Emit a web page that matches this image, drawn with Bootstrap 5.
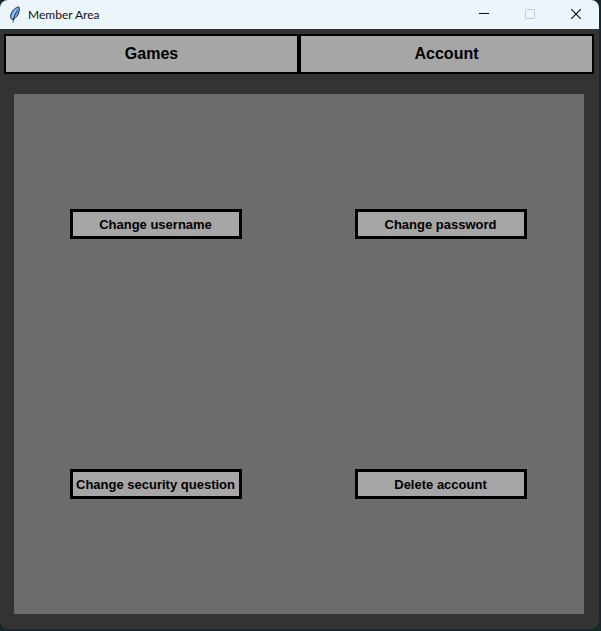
<!DOCTYPE html>
<html lang="en">
<head>
<meta charset="utf-8">
<meta name="viewport" content="width=device-width, initial-scale=1">
<title>Member Area</title>
<link href="https://cdn.jsdelivr.net/npm/bootstrap@5.3.0/dist/css/bootstrap.min.css" rel="stylesheet">
<style>
  body { background: #16262d; font-family: "Liberation Sans", Arial, sans-serif; padding: 0 2px 2px 0; }
  .app-window { background: #333; border-radius: 8px; }
  .title-bar { background: #ecf5f9; height: 29px; padding-left: 8px; }
  .title-text { font: 400 12px/16px Lato, "Open Sans", sans-serif; color: #111; margin: 0 0 0 7px; }
  .caption-btn { width: 46px; height: 29px; color: #111; padding: 0 0 2px; }
  .caption-btn:disabled { color: #c2c7ca; border: 0; opacity: 1; }
  .tab-row { padding: 5px 5px 0 4px; }
  .tab-btn, .action-btn { background: #a6a6a6; color: #000; border: 2px solid #000; border-radius: 0; font-weight: 700; }
  .tab-btn { height: 40px; font-size: 16px; line-height: 20px; padding: 0 0 1px; }
  .tab-btn:hover, .action-btn:hover { background: #b3b3b3; color: #000; border-color: #000; }
  .panel { background: #6c6c6c; margin: 20px 15px 15px 14px; }
  .panel .col-6 { padding-right: 2px; }
  .action-btn { width: 172px; height: 30px; border-width: 3px; font-size: 13px; line-height: 20px; padding: 2px 0 0; }
</style>
</head>
<body class="vh-100 d-flex flex-column">
<div class="app-window flex-fill d-flex flex-column overflow-hidden">
  <header class="title-bar d-flex align-items-center">
    <svg width="13" height="18" viewBox="0 0 13 18" aria-hidden="true">
      <path d="M10.800 .8C8 1.200 5 3.600 3.400 7C2.300 9.300 2.300 11.500 3.300 12.800L5.200 13.800C8.200 11.800 10.300 9 11 5.800C11.500 3.600 11.500 2 10.800 .8Z" fill="#65a3ea" stroke="#202a38" stroke-width=".9"/>
      <path d="M8.300 3.500C6.300 6.200 5 9 4.500 12" fill="none" stroke="#b9d8f5" stroke-width="1"/>
      <path d="M9.400 4.500C7 8 5.600 11 5 16.500" fill="none" stroke="#17202c" stroke-width=".8"/>
    </svg>
    <h1 class="title-text">Member Area</h1>
    <div class="d-flex ms-auto">
      <button type="button" class="btn border-0 rounded-0 caption-btn d-flex align-items-center justify-content-center" aria-label="Minimize">
        <svg width="10" height="10" viewBox="0 0 10 10"><path d="M0 4.500H10" stroke="currentColor"/></svg>
      </button>
      <button type="button" class="btn border-0 rounded-0 caption-btn d-flex align-items-center justify-content-center" aria-label="Maximize" disabled>
        <svg width="10" height="10" viewBox="0 0 10 10"><rect x=".5" y=".5" width="9" height="9" rx="1" fill="none" stroke="currentColor"/></svg>
      </button>
      <button type="button" class="btn border-0 rounded-0 caption-btn d-flex align-items-center justify-content-center" aria-label="Close">
        <svg width="10" height="10" viewBox="0 0 10 10"><path d="M0 0L10 10M10 0L0 10" stroke="currentColor" stroke-width="1.200"/></svg>
      </button>
    </div>
  </header>
  <nav class="tab-row d-flex" aria-label="Sections">
    <button type="button" class="btn tab-btn w-50">Games</button>
    <button type="button" class="btn tab-btn w-50">Account</button>
  </nav>
  <main class="panel flex-fill d-flex flex-column">
    <div class="row g-0 flex-fill align-items-center">
      <div class="col-6 text-center"><button type="button" class="btn action-btn">Change username</button></div>
      <div class="col-6 text-center"><button type="button" class="btn action-btn">Change password</button></div>
    </div>
    <div class="row g-0 flex-fill align-items-center">
      <div class="col-6 text-center"><button type="button" class="btn action-btn">Change security question</button></div>
      <div class="col-6 text-center"><button type="button" class="btn action-btn">Delete account</button></div>
    </div>
  </main>
</div>
<script src="https://cdn.jsdelivr.net/npm/bootstrap@5.3.0/dist/js/bootstrap.bundle.min.js"></script>
</body>
</html>
